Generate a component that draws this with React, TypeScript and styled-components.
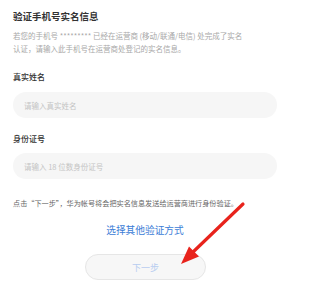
import styled, { createGlobalStyle } from "styled-components";

const GlobalStyle = createGlobalStyle`
  html, body {
    margin: 0;
    padding: 0;
    background: #ffffff;
  }
  body {
    font-family: "Noto Sans CJK SC", "Noto Sans", sans-serif;
  }
`;

interface IField {
  label: string;
  placeholder: string;
}

const fields: IField[] = [
  { label: "真实姓名", placeholder: "请输入真实姓名" },
  { label: "身份证号", placeholder: "请输入 18 位数身份证号" },
];

export default function App() {
  return (
    <>
      <GlobalStyle />
      <Page>
        <Title>验证手机号实名信息</Title>
        <Description>
          若您的手机号 ********* 已经在运营商 (移动/联通/电信) 处完成了实名
          <br />
          认证，请输入此手机号在运营商处登记的实名信息。
        </Description>
        {fields.map((field, i) => (
          <Field key={i} $first={i === 0}>
            <Label>{field.label}</Label>
            <Input placeholder={field.placeholder} />
          </Field>
        ))}
        <Note>点击“下一步”，华为帐号将会把实名信息发送给运营商进行身份验证。</Note>
        <LinkText>选择其他验证方式</LinkText>
        <NextButton>下一步</NextButton>
        <Arrow width="313" height="281" viewBox="0 0 313 281">
          <line
            x1="243"
            y1="204"
            x2="192"
            y2="253"
            stroke="#e8231c"
            strokeWidth="3.2"
            strokeLinecap="round"
          />
          <polygon points="181,264 189,246.5 199,256.5" fill="#e8231c" />
        </Arrow>
      </Page>
    </>
  );
}

const Page = styled.div`
  position: relative;
  width: 313px;
  height: 281px;
  box-sizing: border-box;
  padding: 9px 36px 0 13px;
  display: flex;
  flex-direction: column;
  overflow: hidden;
`;

const Title = styled.div`
  font-size: 9.5px;
  line-height: 14px;
  font-weight: 700;
  color: #333333;
`;

const Description = styled.div`
  margin-top: 5.75px;
  font-size: 7.5px;
  line-height: 13.5px;
  color: #a8a8a8;
  white-space: nowrap;
`;

const Field = styled.div<{ $first: boolean }>`
  display: flex;
  flex-direction: column;
  margin-top: ${(p) => (p.$first ? "14.75px" : "14.5px")};
  gap: ${(p) => (p.$first ? "9.5px" : "8.5px")};
`;

const Label = styled.div`
  font-size: 8px;
  line-height: 12px;
  font-weight: 500;
  color: #333333;
`;

const Input = styled.input`
  height: 26px;
  width: 264px;
  box-sizing: border-box;
  border: none;
  border-radius: 13px;
  background: #f6f6f6;
  padding: 0 11px;
  font-family: inherit;
  font-size: 7.5px;
  outline: none;
  &::placeholder {
    color: #c4c4c4;
  }
`;

const Note = styled.div`
  margin-top: 19px;
  font-size: 7.15px;
  line-height: 10px;
  color: #666666;
  white-space: nowrap;
`;

const LinkText = styled.div`
  margin-top: 16px;
  width: 264px;
  text-align: center;
  font-size: 9.7px;
  line-height: 12px;
  color: #3b7cd6;
`;

const NextButton = styled.button`
  margin: 18px 0 0 72px;
  width: 121px;
  height: 26px;
  flex-shrink: 0;
  box-sizing: border-box;
  border: 1px solid #e6e6e6;
  border-radius: 13px;
  background: #f7f7f7;
  font-family: inherit;
  font-size: 9px;
  color: #b7cdf0;
  padding: 0;
`;

const Arrow = styled.svg`
  position: absolute;
  left: 0;
  top: 0;
  pointer-events: none;
`;
